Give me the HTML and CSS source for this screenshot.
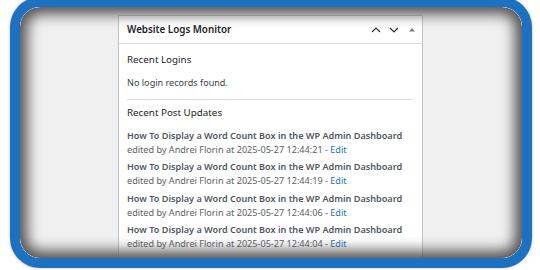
FILE: index.html
```html
<!DOCTYPE html>
<html>
<head>
<meta charset="utf-8">
<link rel="stylesheet" href="styles.css">
</head>
<body>
<div class="frame">
  <div class="screen">
    <div class="widget">
      <div class="widget-head">
        <h2 class="widget-title">Website Logs Monitor</h2>
        <div class="widget-actions">
          <svg class="ico" width="12" height="12" viewBox="0 0 12 12"><path d="M2 8 L6 4 L10 8" fill="none" stroke="#2c3338" stroke-width="1.2"/></svg>
          <svg class="ico" width="12" height="12" viewBox="0 0 12 12"><path d="M2 4 L6 8 L10 4" fill="none" stroke="#2c3338" stroke-width="1.2"/></svg>
          <svg class="ico small" width="8" height="12" viewBox="0 0 8 12"><path d="M1 7.5 L4 4 L7 7.5 Z" fill="#787c82"/></svg>
        </div>
      </div>
      <div class="widget-body">
        <h3 class="section-title">Recent Logins</h3>
        <p class="empty">No login records found.</p>
        <hr class="sep">
        <h3 class="section-title">Recent Post Updates</h3>
        <ul class="updates">
          <li class="update"><span class="post">How To Display a Word Count Box in the WP Admin Dashboard</span><span class="meta">edited by Andrei Florin at 2025-05-27 12:44:21 - <a class="edit">Edit</a></span></li>
          <li class="update"><span class="post">How To Display a Word Count Box in the WP Admin Dashboard</span><span class="meta">edited by Andrei Florin at 2025-05-27 12:44:19 - <a class="edit">Edit</a></span></li>
          <li class="update"><span class="post">How To Display a Word Count Box in the WP Admin Dashboard</span><span class="meta">edited by Andrei Florin at 2025-05-27 12:44:06 - <a class="edit">Edit</a></span></li>
          <li class="update"><span class="post">How To Display a Word Count Box in the WP Admin Dashboard</span><span class="meta">edited by Andrei Florin at 2025-05-27 12:44:04 - <a class="edit">Edit</a></span></li>
        </ul>
      </div>
    </div>
  </div>
</div>
</body>
</html>
```

FILE: styles.css
```css
html, body {
  margin: 0;
  padding: 0;
  background: #ffffff;
  overflow: hidden;
}
body {
  width: 540px;
  height: 270px;
  font-family: "Noto Sans", "Open Sans", sans-serif;
}
.frame {
  position: relative;
  box-sizing: border-box;
  width: 522px;
  height: 271px;
  margin: -3px 0 0 10px;
  border: 10px solid #1e70c1;
  border-radius: 30px;
  overflow: hidden;
  box-shadow: 0 0 3px rgba(0,0,0,0.25);
}
.frame::after {
  content: "";
  position: absolute;
  inset: 0;
  border-radius: 20px;
  box-shadow: inset 0 0 14px 7px #4f4f4f;
  pointer-events: none;
}
.screen {
  height: 100%;
  background: #f0f0f1;
  padding: 8px 0 0 98px;
  box-sizing: border-box;
}
.widget {
  width: 305px;
  box-sizing: border-box;
  background: #ffffff;
  border: 1px solid #c3c4c7;
  height: 300px;
}
.widget-head {
  display: flex;
  align-items: center;
  justify-content: space-between;
  height: 27px;
  border-bottom: 1px solid #dcdcde;
  padding: 0 6px 0 8px;
}
.widget-title {
  margin: 0;
  font-size: 9.8px;
  font-weight: 600;
  color: #1d2327;
}
.widget-actions {
  display: flex;
  align-items: center;
  gap: 6px;
}
.ico { display: block; }
.ico.small { margin-left: 2px; }
.widget-body {
  padding: 9px 9px 0 8px;
}
.section-title {
  margin: 0;
  font-size: 9.8px;
  line-height: 14px;
  font-weight: 400;
  color: #1d2327;
}
.empty {
  margin: 9px 0 0;
  font-size: 9.1px;
  line-height: 14px;
  color: #3c434a;
}
.sep {
  margin: 9px 0 6px;
  border: 0;
  border-top: 1px solid #dcdcde;
}
.updates {
  list-style: none;
  margin: 9px 0 0;
  padding: 0;
}
.update {
  display: flex;
  flex-direction: column;
  margin-bottom: 3.4px;
  font-size: 9.1px;
  line-height: 14px;
}
.post {
  font-weight: 600;
  color: #50575e;
  white-space: nowrap;
}
.meta {
  color: #5b6167;
  white-space: nowrap;
}
.edit {
  color: #2271b1;
}
```
